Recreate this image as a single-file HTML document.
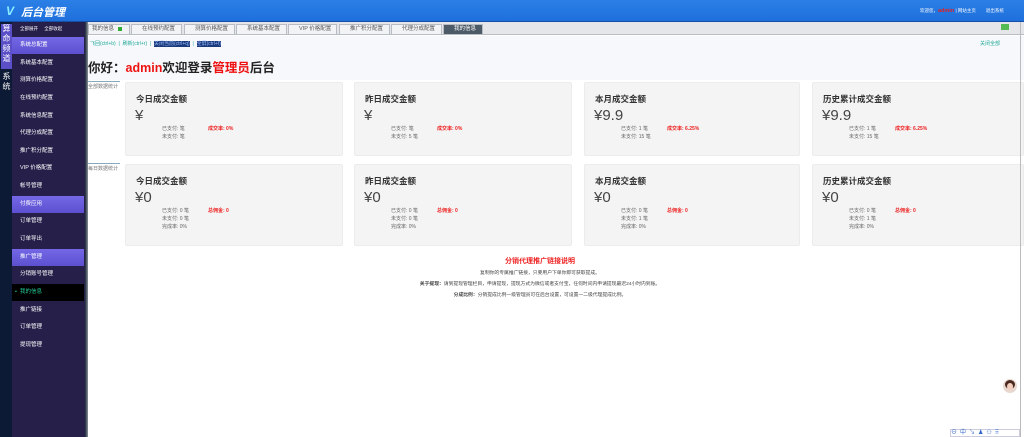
<!DOCTYPE html>
<html><head><meta charset="utf-8"><style>
*{margin:0;padding:0;box-sizing:border-box}
body{width:1024px;height:437px;overflow:hidden;background:#fff;font-family:"Liberation Sans","Noto Sans CJK SC",sans-serif;position:relative}
.a{position:absolute}
#hd{left:0;top:0;width:1024px;height:22px;background:linear-gradient(#2a80e6,#1f6fdc);border-bottom:1px solid #1550a8}
#lb{left:0;top:22px;width:12px;height:415px;background:#0c1a35}
#sb{left:12px;top:22px;width:73px;height:415px;background:#261f4a}
#sbe{left:85px;top:22px;width:3px;height:415px;background:linear-gradient(90deg,#1a2a3a,#8a8f96)}
.it{position:absolute;left:12px;width:72px;height:17px;color:#fff;font-size:5.5px;line-height:17px;padding-left:8px}
.hi{background:linear-gradient(#7468e6,#5c50d0)}
.tab{position:absolute;top:24px;height:11px;border:1px solid #b8bcc4;background:#f2f3f5;font-size:5.5px;line-height:9px;color:#555;padding-left:10px}
.tab i{display:inline-block;width:4px;height:4px;background:#3a3;margin-left:4px;vertical-align:middle}
.card{position:absolute;background:#f4f4f4;border:1px solid #ececec;border-radius:2px}
.card b{position:absolute;left:10px;top:10px;font-size:8.5px;color:#333}
.card .m{position:absolute;left:9px;top:24px;font-size:15px;color:#444}
.card .s{position:absolute;left:36px;top:42px;font-size:5px;line-height:8px;color:#666}
.card .r{position:absolute;left:82px;top:42px;font-size:5px;color:#e22;font-weight:bold}
.lab{position:absolute;left:88px;width:32px;font-size:5px;color:#777;border-top:1px solid #8ab;padding-top:1px}
</style></head><body>
<div id="hd" class="a">
 <div class="a" style="left:6px;top:5px;width:12px;height:12px;color:#8ef;font-size:12px;font-weight:bold;line-height:12px;font-style:italic">V</div>
 <div class="a" style="left:21px;top:4px;color:#fff;font-size:11px;font-weight:bold;font-style:italic">后台管理</div>
 <div class="a" style="left:920px;top:8px;font-size:4.5px;color:#fff">欢迎您，<span style="color:#d22;font-weight:bold;font-size:5.5px">admin</span> | 网站主页 &nbsp;&nbsp;&nbsp;&nbsp;&nbsp;&nbsp; 退出系统</div>
</div>
<div id="lb" class="a"></div>
<div class="a" style="left:1px;top:24px;width:11px;height:45px;background:#5b4fc8;color:#fff;font-size:8px;line-height:10px;text-align:center">算命频道</div>
<div class="a" style="left:1px;top:72px;width:11px;color:#fff;font-size:8px;line-height:10px;text-align:center">系统</div>
<div id="sb" class="a"></div>
<div id="sbe" class="a"></div>
<div class="a" style="left:20px;top:26px;font-size:4.5px;color:#fff">全部展开 &nbsp;&nbsp;&nbsp; 全部收起</div>
<div class="it hi" style="top:37px">系统总配置</div>
<div class="it" style="top:55px">系统基本配置</div>
<div class="it" style="top:72px">测算价格配置</div>
<div class="it" style="top:90px">在线预约配置</div>
<div class="it" style="top:108px">系统信息配置</div>
<div class="it" style="top:125px">代理分成配置</div>
<div class="it" style="top:143px">推广积分配置</div>
<div class="it" style="top:160px">VIP 价格配置</div>
<div class="it" style="top:178px">帐号管理</div>
<div class="it hi" style="top:196px">付费应用</div>
<div class="it" style="top:213px">订单管理</div>
<div class="it" style="top:231px">订单导出</div>
<div class="it hi" style="top:249px">推广管理</div>
<div class="it" style="top:266px">分销账号管理</div>
<div class="it" style="top:284px;background:#000;color:#2c9;padding-left:3px">• &nbsp;我的信息</div>
<div class="it" style="top:302px">推广链接</div>
<div class="it" style="top:319px">订单管理</div>
<div class="it" style="top:337px">提现管理</div>

<div class="a" style="left:88px;top:22px;width:936px;height:13px;background:#e4e6ea;border-bottom:1px solid #b8bcc4"></div>
<div class="tab" style="left:88px;width:42px;padding-left:3px">我的信息<i></i></div>
<div class="tab" style="left:131px;width:51px">在线预约配置<i></i></div>
<div class="tab" style="left:184px;width:51px">测算价格配置<i></i></div>
<div class="tab" style="left:236px;width:51px">系统基本配置<i></i></div>
<div class="tab" style="left:288px;width:49px">VIP 价格配置<i></i></div>
<div class="tab" style="left:339px;width:51px">推广积分配置<i></i></div>
<div class="tab" style="left:391px;width:51px">代理分成配置<i></i></div>
<div class="tab" style="left:443px;width:40px;background:#4d5a68;color:#fff">我的信息<i></i></div>
<div class="a" style="left:1001px;top:24px;width:8px;height:6px;background:#5b5"></div>
<div class="a" style="left:88px;top:36px;width:936px;height:14px;background:#f6f8fb"></div>
<div class="a" style="left:90px;top:40px;font-size:5px;color:#2a9">飞回(ctrl+b) &nbsp;|&nbsp; 刷新(ctrl+r) &nbsp;|&nbsp; <span style="background:#1a3a7a;color:#9bf">关闭当前(ctrl+q)</span> &nbsp;|&nbsp; <span style="background:#1a3a7a;color:#9bf">全屏(ctrl+f)</span></div>
<div class="a" style="left:980px;top:40px;font-size:5px;color:#2a9">关闭全部</div>
<div class="a" style="left:88px;top:50px;width:936px;height:30px;background:#f6f8fb"></div>
<div class="a" style="left:88px;top:57px;font-size:12.5px;font-weight:bold;color:#222">你好：<span style="color:#e11">admin</span>欢迎登录<span style="color:#e11">管理员</span>后台</div>

<div class="lab" style="top:81px">全部数据统计</div>
<div class="lab" style="top:163px">每日数据统计</div>

<div class="card" style="left:125px;top:82px;width:218px;height:74px"><b>今日成交金额</b><div class="m">¥</div><div class="s">已支付: 笔<br>未支付: 笔</div><div class="r">成交率: 0%</div></div>
<div class="card" style="left:354px;top:82px;width:218px;height:74px"><b>昨日成交金额</b><div class="m">¥</div><div class="s">已支付: 笔<br>未支付: 5 笔</div><div class="r">成交率: 0%</div></div>
<div class="card" style="left:584px;top:82px;width:216px;height:74px"><b>本月成交金额</b><div class="m">¥9.9</div><div class="s">已支付: 1 笔<br>未支付: 15 笔</div><div class="r">成交率: 6.25%</div></div>
<div class="card" style="left:812px;top:82px;width:212px;height:74px"><b>历史累计成交金额</b><div class="m">¥9.9</div><div class="s">已支付: 1 笔<br>未支付: 15 笔</div><div class="r">成交率: 6.25%</div></div>

<div class="card" style="left:125px;top:164px;width:218px;height:82px"><b>今日成交金额</b><div class="m">¥0</div><div class="s">已支付: 0 笔<br>未支付: 0 笔<br>完成率: 0%</div><div class="r">总佣金: 0</div></div>
<div class="card" style="left:354px;top:164px;width:218px;height:82px"><b>昨日成交金额</b><div class="m">¥0</div><div class="s">已支付: 0 笔<br>未支付: 0 笔<br>完成率: 0%</div><div class="r">总佣金: 0</div></div>
<div class="card" style="left:584px;top:164px;width:216px;height:82px"><b>本月成交金额</b><div class="m">¥0</div><div class="s">已支付: 0 笔<br>未支付: 1 笔<br>完成率: 0%</div><div class="r">总佣金: 0</div></div>
<div class="card" style="left:812px;top:164px;width:212px;height:82px"><b>历史累计成交金额</b><div class="m">¥0</div><div class="s">已支付: 0 笔<br>未支付: 1 笔<br>完成率: 0%</div><div class="r">总佣金: 0</div></div>

<div class="a" style="left:340px;top:256px;width:400px;text-align:center;font-size:7px;font-weight:bold;color:#e22">分销代理推广链接说明</div>
<div class="a" style="left:340px;top:268px;width:400px;text-align:center;font-size:4.8px;color:#444;line-height:11px">复制你的专属推广链接，只要用户下单你即可获取提成。<br><b>关于提现：</b>请到提现管理栏目，申请提现，提现方式为微信或者支付宝，任何时间内申请提现最迟24小时内到账。<br><b>分成比例：</b>分销提成比例一级管理员可在后台设置，可设置一二级代理提成比例。</div>

<div class="a" style="left:1003px;top:379px;width:14px;height:14px;border-radius:50%;background:#e8d8d0;overflow:hidden"><div class="a" style="left:2px;top:1px;width:10px;height:9px;border-radius:50%;background:#4a2a20"></div><div class="a" style="left:4px;top:4px;width:6px;height:7px;border-radius:50%;background:#f3d0c0"></div></div>
<div class="a" style="left:950px;top:429px;width:70px;height:8px;border:1px solid #ccd;font-size:6px;color:#36c;line-height:7px;letter-spacing:3px">⊖中↘♟⚇⠿</div>
<div class="a" style="left:1020px;top:22px;width:1px;height:415px;background:#bbb"></div>
</body></html>
